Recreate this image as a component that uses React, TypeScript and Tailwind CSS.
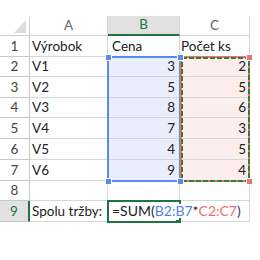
const rows = [
  { n: 1, a: 'Výrobok', b: 'Cena', c: 'Počet ks' },
  { n: 2, a: 'V1', b: '3', c: '2' },
  { n: 3, a: 'V2', b: '5', c: '5' },
  { n: 4, a: 'V3', b: '8', c: '6' },
  { n: 5, a: 'V4', b: '7', c: '3' },
  { n: 6, a: 'V5', b: '4', c: '5' },
  { n: 7, a: 'V6', b: '9', c: '4' },
  { n: 8, a: '', b: '', c: '' },
];

const cell = 'border-r border-b border-[#d6d6d6] flex items-end pb-[3px] whitespace-nowrap';

export default function App() {
  return (
    <div className="w-[260px] h-[260px] bg-white pt-[16px] text-[13.5px] leading-none text-[#222]" style={{ fontFamily: 'Lato, "Open Sans", sans-serif' }}>
      <div className="relative grid grid-cols-[30px_78px_72px_70px] grid-rows-[20px_21px_20px_21px_20px_21px_21px_21px_20px_21px] w-[250px]">
        {/* header row */}
        <div className="relative border-r border-b border-[#d0d0d0]">
          <svg className="absolute left-[14px] top-[4px]" width="12" height="13" viewBox="0 0 12 13">
            <polygon points="12,0 12,13 0,13" fill="#dcdcdc" />
          </svg>
        </div>
        <div className="border-r border-b border-[#d6d6d6] flex items-center justify-center text-[#666]">A</div>
        <div className="border-r border-[#d6d6d6] border-b-2 border-b-[#217346] bg-[#e1e1e1] flex items-center justify-center text-[#217346]">B</div>
        <div className="border-r border-b border-[#d6d6d6] flex items-center justify-center text-[#666]">C</div>

        {rows.map((r) => {
          const sel = r.n >= 2 && r.n <= 7;
          return [
            <div key={`n${r.n}`} className="border-r border-b border-[#c8c8c8] flex items-end justify-center pb-[3px] text-[#444]">{r.n}</div>,
            <div key={`a${r.n}`} className={`${cell} pl-[2px]`}>{r.a}</div>,
            <div key={`b${r.n}`} className={`${cell} ${sel ? 'bg-[#e8eefb] justify-end pr-[4px]' : 'pl-[4px]'}`}>{r.b}</div>,
            <div key={`c${r.n}`} className={`${cell} ${sel ? 'bg-[#fdeeee] justify-end pr-[3px]' : 'pl-[1px]'}`}>{r.c}</div>,
          ];
        })}

        {/* row 9 */}
        <div className="border-b border-[#c8c8c8] border-r-2 border-r-[#217346] bg-[#e1e1e1] flex items-end justify-center pb-[3px] text-[#217346]">9</div>
        <div className={`${cell} pl-[2px]`}>Spolu tržby:</div>
        <div className={`${cell} pl-[2px] pb-[2px]`}>
          <span className="relative z-20 bg-white pl-[2px] pr-[1px] text-[14px]">
            =SUM(<span className="text-[#4f7fe6]">B2:B7</span>*<span className="text-[#ef6b6b]">C2:C7</span><span className="text-[#1f3a8a]">)</span>
          </span>
        </div>
        <div className={cell} />

        {/* blue range B2:B7 */}
        <div className="absolute left-[107px] top-[40px] w-[74px] h-[126px] border-2 border-[#5a8cf0] pointer-events-none" />
        {/* red range C2:C7 with marquee */}
        <div className="absolute left-[180px] top-[40px] w-[70px] h-[126px] border-2 border-[#f07272] pointer-events-none" />
        <svg className="absolute left-[181px] top-[41px] pointer-events-none" width="69" height="125" viewBox="0 0 69 125">
          <rect x="1" y="1" width="67" height="123" fill="none" stroke="#2f7d3a" strokeWidth="2" strokeDasharray="5 2" />
        </svg>
        {/* corner handles */}
        <div className="absolute left-[105px] top-[38px] w-[5px] h-[5px] bg-[#5a8cf0] border border-white box-content" />
        <div className="absolute left-[177px] top-[38px] w-[5px] h-[5px] bg-[#5a8cf0] border border-white box-content" />
        <div className="absolute left-[105px] top-[162px] w-[5px] h-[5px] bg-[#5a8cf0] border border-white box-content" />
        <div className="absolute left-[177px] top-[162px] w-[5px] h-[5px] bg-[#5a8cf0] border border-white box-content" />
        <div className="absolute left-[246px] top-[38px] w-[5px] h-[5px] bg-[#f07272] border border-white box-content" />
        <div className="absolute left-[246px] top-[162px] w-[5px] h-[5px] bg-[#f07272] border border-white box-content" />

        {/* active cell B9 */}
        <div className="absolute left-[107px] top-[184px] w-[74px] h-[23px] border-2 border-[#217346] z-10 pointer-events-none" />
        <div className="absolute left-[176px] top-[204px] w-[5px] h-[3px] bg-[#217346] z-10" />
      </div>
    </div>
  );
}
